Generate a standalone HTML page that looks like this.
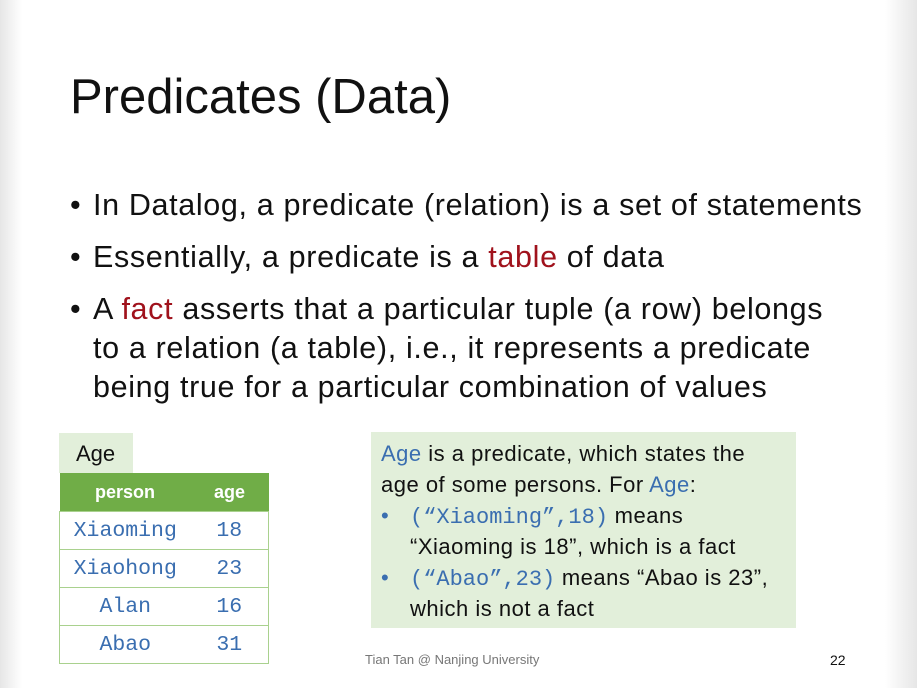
<!DOCTYPE html>
<html><head><meta charset="utf-8"><style>
body{margin:0;width:917px;height:688px;overflow:hidden;background:#fff;font-family:"Liberation Sans",sans-serif;position:relative}
.edgeL{position:absolute;left:0;top:0;width:22px;height:688px;background:linear-gradient(to right,#e6e6e6,#fff)}
.edgeR{position:absolute;right:0;top:0;width:32px;height:688px;background:linear-gradient(to left,#e6e6e6,#fff)}
.t{position:absolute;left:70px;top:69px;font-size:49px;color:#111;white-space:nowrap}
.b{position:absolute;left:70px;font-size:30.5px;letter-spacing:0.65px;color:#111;white-space:nowrap;line-height:39px}
.b .d{position:absolute;left:0}
.b .x{position:absolute;left:23px}
.red{color:#a0121c}
.age{position:absolute;left:59px;top:433px;width:74px;height:40px;background:#e2efda;font-size:22px;line-height:42px;box-sizing:border-box;padding-left:17px;color:#111}
table{position:absolute;left:59px;top:473px;border-collapse:collapse;width:209px;table-layout:fixed}
td{height:37px;padding:0;border:1px solid #a9d18e;border-left:none;border-right:none;font-family:"Liberation Mono",monospace;font-size:21.5px;color:#3a6eb0;text-align:center}
th{height:38px;background:#70ad47;color:#fff;font-size:18px;font-weight:bold;padding:0}
tr td:first-child{border-left:1px solid #a9d18e}
tr td:last-child{border-right:1px solid #a9d18e}
.box{position:absolute;left:371px;top:432px;width:425px;height:196px;background:#e2efda}
.l{position:absolute;left:381px;font-size:22px;letter-spacing:0.5px;color:#111;white-space:nowrap}
.blue{color:#3a6eb0}
.m{font-family:"Liberation Mono",monospace;color:#3a6eb0;font-size:22px;letter-spacing:0}
.foot{position:absolute;top:652px;font-size:13px;color:#777}
</style></head><body>
<div class="edgeL"></div><div class="edgeR"></div>
<div class="t">Predicates (Data)</div>
<div class="b" style="top:186px"><span class="d">•</span><span class="x">In Datalog, a predicate (relation) is a set of statements</span></div>
<div class="b" style="top:238px"><span class="d">•</span><span class="x">Essentially, a predicate is a <span class="red">table</span> of data</span></div>
<div class="b" style="top:290px"><span class="d">•</span><span class="x">A <span class="red">fact</span> asserts that a particular tuple (a row) belongs<br>to a relation (a table), i.e., it represents a predicate<br>being true for a particular combination of values</span></div>
<div class="age">Age</div>
<table>
<colgroup><col style="width:131px"><col style="width:78px"></colgroup>
<tr><th>person</th><th>age</th></tr>
<tr><td>Xiaoming</td><td>18</td></tr>
<tr><td>Xiaohong</td><td>23</td></tr>
<tr><td>Alan</td><td>16</td></tr>
<tr><td>Abao</td><td>31</td></tr>
</table>
<div class="box"></div>
<div class="l" style="top:441px"><span class="blue">Age</span> is a predicate, which states the</div>
<div class="l" style="top:472px">age of some persons. For <span class="blue">Age</span>:</div>
<div class="l" style="top:503px"><span class="blue">•</span></div>
<div class="l" style="top:503px;left:410px"><span class="m">(“Xiaoming”,18)</span> means</div>
<div class="l" style="top:534px;left:410px">“Xiaoming is 18”, which is a fact</div>
<div class="l" style="top:565px"><span class="blue">•</span></div>
<div class="l" style="top:565px;left:410px"><span class="m">(“Abao”,23)</span> means “Abao is 23”,</div>
<div class="l" style="top:596px;left:410px">which is not a fact</div>
<div class="foot" style="left:365px">Tian Tan @ Nanjing University</div>
<div class="foot" style="left:830px;color:#111;font-size:14px">22</div>
</body></html>
